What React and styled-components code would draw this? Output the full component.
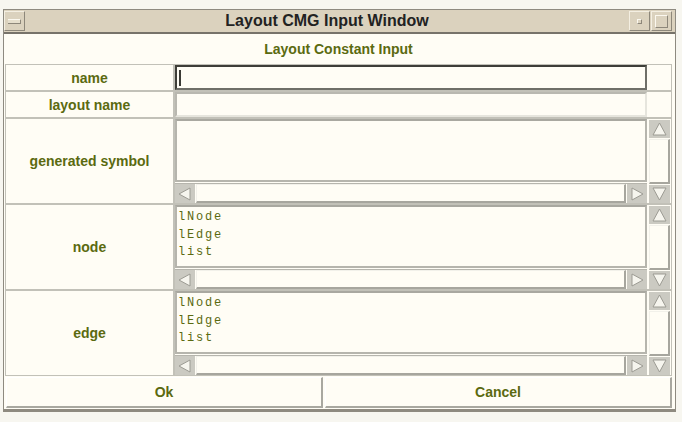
import styled, { createGlobalStyle } from "styled-components";

const Global = createGlobalStyle`
  html, body {
    margin: 0;
    background: #f7f6f0;
  }
  body {
    font-family: "Liberation Sans", Arial, sans-serif;
  }
`;

const olive = "#5b6a10";
const cream = "#fffdf5";
const line = "#c2c1b8";

const Page = styled.div`
  padding: 9px 0 0 3px;
`;

const Window = styled.div`
  width: 673px;
  box-sizing: border-box;
  border: 1px solid #8e8a80;
  border-bottom: 3px solid #8e8a80;
  background: ${cream};
`;

const TitleBar = styled.div`
  display: flex;
  align-items: center;
  gap: 1px;
  height: 22px;
  padding: 0 3px 0 0;
  background: #dbd2be;
  border-bottom: 2px solid #77736a;
`;

const TitleButton = styled.div`
  width: 21px;
  height: 20px;
  box-sizing: border-box;
  display: flex;
  align-items: center;
  justify-content: center;
  border-top: 1px solid #f4efe2;
  border-left: 1px solid #f4efe2;
  border-right: 1px solid #8d877a;
  border-bottom: 1px solid #8d877a;
`;

const MenuBar = styled.div`
  width: 12px;
  height: 3px;
  background: #e6dfcd;
  border-top: 1px solid #fbf8ef;
  border-bottom: 1px solid #8d877a;
  border-right: 1px solid #8d877a;
`;

const MinDot = styled.div`
  width: 3px;
  height: 3px;
  border-top: 1px solid #fbf8ef;
  border-left: 1px solid #fbf8ef;
  border-right: 1px solid #8d877a;
  border-bottom: 1px solid #8d877a;
`;

const MaxBox = styled.div`
  width: 11px;
  height: 11px;
  border-top: 1px solid #fbf8ef;
  border-left: 1px solid #fbf8ef;
  border-right: 1px solid #8d877a;
  border-bottom: 1px solid #8d877a;
`;

const Title = styled.div`
  flex: 1;
  text-align: center;
  font-size: 16px;
  font-weight: bold;
  color: #222;
`;

const Body = styled.div`
  padding: 0 3px 1px 1px;
`;

const Heading = styled.div`
  height: 30px;
  display: flex;
  align-items: center;
  justify-content: center;
  font-size: 14px;
  font-weight: bold;
  color: ${olive};
`;

const Form = styled.div`
  display: grid;
  grid-template-columns: 167px 1fr;
  grid-template-rows: 25px 25px 84px 84px 84px;
  gap: 2px;
  background: ${line};
  border: 1px solid ${line};
`;

const Label = styled.div`
  display: flex;
  align-items: center;
  justify-content: center;
  background: ${cream};
  font-size: 14px;
  font-weight: bold;
  color: ${olive};
`;

const ValueCell = styled.div`
  display: grid;
  grid-template-columns: 472px 21px;
  grid-template-rows: ${(p) => (p.$scroll ? "63px 20px" : "1fr")};
  column-gap: 2px;
  row-gap: 1px;
  background: ${cream};
`;

const Field = styled.div`
  box-sizing: border-box;
  display: flex;
  align-items: center;
  padding-left: 2px;
  border: 2px solid;
  border-color: ${(p) =>
    p.$focus ? "#3e3e38 #6f6f68 #6f6f68 #3e3e38" : "#b9b8b0 #e6e5dd #e6e5dd #b9b8b0"};
`;

const Caret = styled.div`
  width: 2px;
  height: 16px;
  background: #3a3a34;
`;

const TextArea = styled.div`
  grid-column: 1;
  grid-row: 1;
  box-sizing: border-box;
  border: 2px solid #b6b5ad;
  border-top-color: #a9a8a0;
  padding: 2px 1px 0;
  font-family: "Liberation Mono", "Courier New", monospace;
  font-size: 12px;
  letter-spacing: 1.8px;
  line-height: 17.5px;
  color: ${olive};
  white-space: pre;
  overflow: hidden;
`;

const HScroll = styled.div`
  grid-column: 1;
  grid-row: 2;
  display: flex;
  box-sizing: border-box;
  border-top: 1px solid #b6b5ad;
  background: ${cream};
`;

const VScroll = styled.div`
  grid-column: 2;
  grid-row: 1 / span 2;
  display: flex;
  flex-direction: column;
  padding-top: 1px;
`;

const Thumb = styled.div`
  flex: 1;
  box-sizing: border-box;
  background: ${cream};
  border-top: 1px solid #f2f1ea;
  border-left: 1px solid #f2f1ea;
  border-right: 2px solid #a7a69e;
  border-bottom: 2px solid #a7a69e;
  margin: ${(p) => (p.$vertical ? "1px 0" : "0 1px")};
`;

const arrowShapes = {
  left: "4,10 15,4 15,16",
  right: "16,10 5,4 5,16",
  up: "10.5,3 4,15 17,15",
  down: "10.5,15 4,3 17,3",
};

function Arrow({ dir }) {
  const vertical = dir === "up" || dir === "down";
  const w = vertical ? 21 : 20;
  const h = vertical ? 18 : 19;
  return (
    <svg width={w} height={h} viewBox={`0 0 ${w} ${h}`} style={{ display: "block", flex: "none" }}>
      <rect x="0" y="0" width={w} height={h} fill="#cbcac2" />
      <polygon points={arrowShapes[dir]} fill="#f6f5ee" stroke="#9c9b93" strokeWidth="1" />
    </svg>
  );
}

function ScrollText({ lines = [] }) {
  return (
    <ValueCell $scroll>
      <TextArea>{lines.join("\n")}</TextArea>
      <HScroll>
        <Arrow dir="left" />
        <Thumb />
        <Arrow dir="right" />
      </HScroll>
      <VScroll>
        <Arrow dir="up" />
        <Thumb $vertical />
        <Arrow dir="down" />
      </VScroll>
    </ValueCell>
  );
}

const ButtonRow = styled.div`
  display: grid;
  grid-template-columns: 317px 1fr;
  gap: 2px;
  padding: 1px 0 0 1px;
`;

const Button = styled.button`
  height: 31px;
  box-sizing: border-box;
  background: ${cream};
  border-top: 1px solid #ffffff;
  border-left: 1px solid #ffffff;
  border-right: 2px solid #a9a8a0;
  border-bottom: 2px solid #a9a8a0;
  font-family: "Liberation Sans", Arial, sans-serif;
  font-size: 14px;
  font-weight: bold;
  color: ${olive};
  padding: 0;
`;

const listing = ["lNode", "lEdge", "list"];

export default function App() {
  return (
    <>
      <Global />
      <Page>
        <Window>
          <TitleBar>
            <TitleButton>
              <MenuBar />
            </TitleButton>
            <Title>Layout CMG Input Window</Title>
            <TitleButton>
              <MinDot />
            </TitleButton>
            <TitleButton>
              <MaxBox />
            </TitleButton>
          </TitleBar>
          <Body>
            <Heading>Layout Constant Input</Heading>
            <Form>
              <Label>name</Label>
              <ValueCell>
                <Field $focus>
                  <Caret />
                </Field>
              </ValueCell>
              <Label>layout name</Label>
              <ValueCell>
                <Field />
              </ValueCell>
              <Label>generated symbol</Label>
              <ScrollText />
              <Label>node</Label>
              <ScrollText lines={listing} />
              <Label>edge</Label>
              <ScrollText lines={listing} />
            </Form>
            <ButtonRow>
              <Button>Ok</Button>
              <Button>Cancel</Button>
            </ButtonRow>
          </Body>
        </Window>
      </Page>
    </>
  );
}
